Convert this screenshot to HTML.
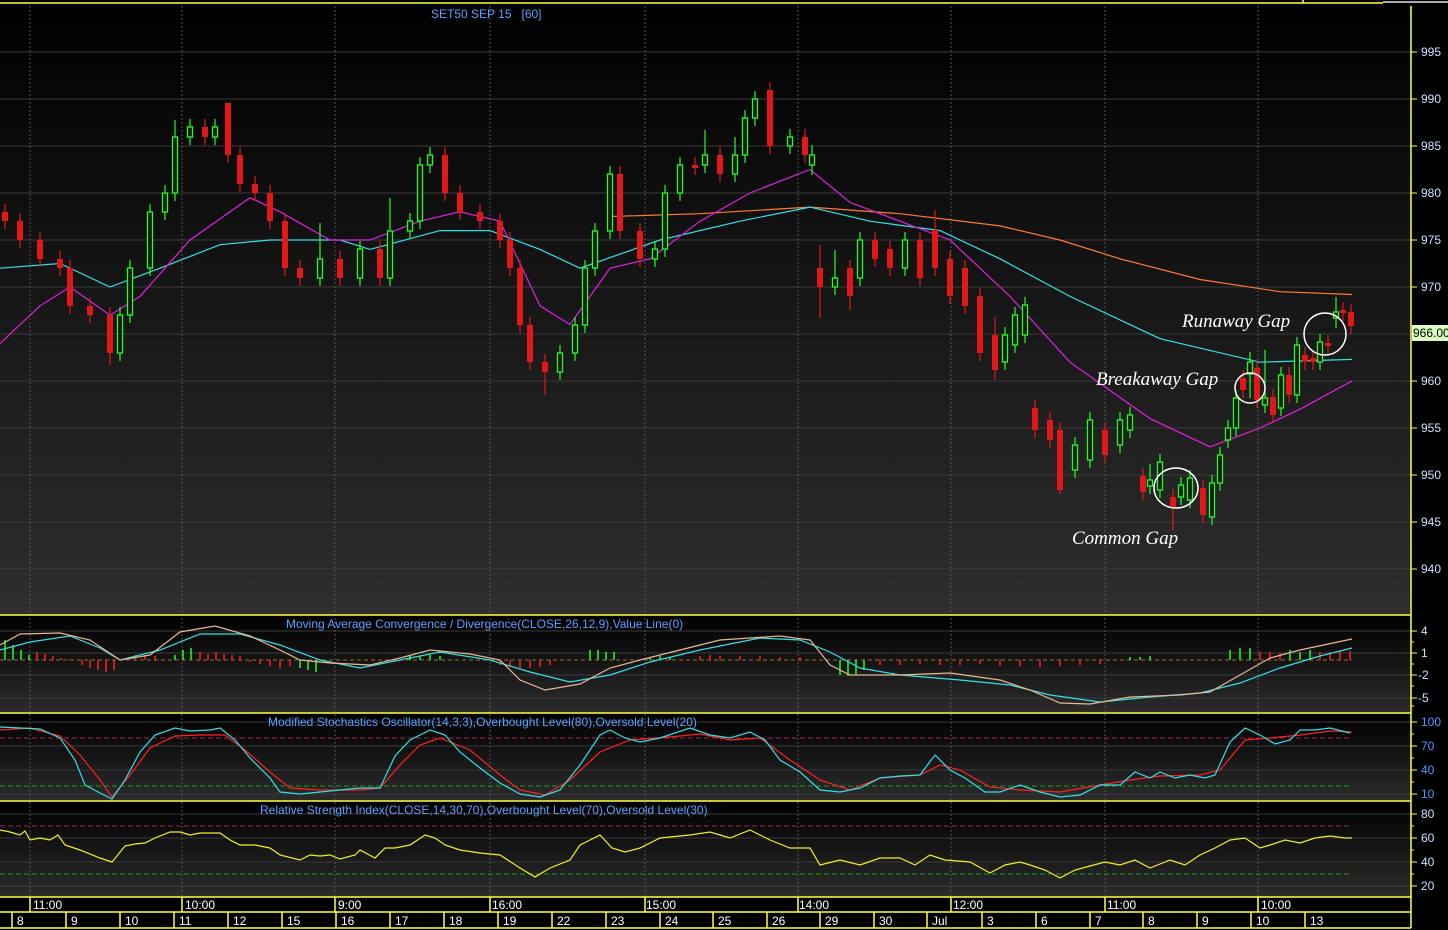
<!DOCTYPE html>
<html><head><meta charset="utf-8">
<style>
html,body{margin:0;padding:0;background:#000;}
svg{display:block;font-family:"Liberation Sans",sans-serif;}
.ax{fill:#cfe0ff;font-size:12px;}
.sb{fill:#4a9cff;font-size:12px;}
.tl{fill:#5aa0ff;font-size:12px;}
.dt{fill:#fff;font-size:12px;}
.an{fill:#fff;font-family:"Liberation Serif",serif;font-style:italic;font-size:19px;}
.g rect{fill:#181818;stroke:#20ff20;stroke-width:1.3;}
.r rect{fill:#e01818;}
</style></head><body>
<svg width="1448" height="930" viewBox="0 0 1448 930" xmlns="http://www.w3.org/2000/svg">
<defs>
<linearGradient id="gm" x1="0" y1="0" x2="0" y2="1"><stop offset="0" stop-color="#000"/><stop offset="1" stop-color="#2e2e2e"/></linearGradient>
<linearGradient id="gs" x1="0" y1="0" x2="0" y2="1"><stop offset="0" stop-color="#000"/><stop offset="1" stop-color="#2c2c2c"/></linearGradient>
</defs>
<rect x="0" y="0" width="1448" height="930" fill="#000"/>
<rect x="0" y="4" width="1411" height="611" fill="url(#gm)"/>
<rect x="0" y="616" width="1411" height="97" fill="url(#gs)"/>
<rect x="0" y="714" width="1411" height="87" fill="url(#gs)"/>
<rect x="0" y="802" width="1411" height="95" fill="url(#gs)"/>
<!-- grid -->
<g stroke="#3a3a3a" stroke-width="1">
<path d="M0 52H1411M0 99H1411M0 146H1411M0 193H1411M0 240H1411M0 287H1411M0 334H1411M0 381H1411M0 428H1411M0 475H1411M0 522H1411M0 569H1411M0 631H1411M0 653H1411M0 675H1411M0 698H1411M0 722H1411M0 746H1411M0 770H1411M0 794H1411M0 814H1411M0 838H1411M0 862H1411M0 886H1411"/>
</g>
<path d="M1411 52h6M1411 99h6M1411 146h6M1411 193h6M1411 240h6M1411 287h6M1411 334h6M1411 381h6M1411 428h6M1411 475h6M1411 522h6M1411 569h6M1411 631h6M1411 653h6M1411 675h6M1411 698h6M1411 722h6M1411 746h6M1411 770h6M1411 794h6M1411 814h6M1411 838h6M1411 862h6M1411 886h6M1411 642h3M1411 664h3M1411 686h3M1411 706h3M1411 734h3M1411 758h3M1411 782h3M1411 826h3M1411 850h3M1411 874h3" stroke="#ffff40"/>
<path d="M30 6V897M182 6V897M335 6V897M490 6V897M645 6V897M798 6V897M951 6V897M1105 6V897M1258 6V897" stroke="#555" stroke-dasharray="2,2"/>
<path d="M0 738H1352M0 826H1352" stroke="#a0204a" stroke-dasharray="5,3"/>
<path d="M0 786H1352M0 874H1352" stroke="#1a9a1a" stroke-dasharray="5,3"/>
<path d="M0 660H1352" stroke="#a06a20" stroke-dasharray="4,3"/>

<!-- moving averages -->
<g fill="none" stroke-width="1.2">
<polyline stroke="#ff7a30" points="610,216.5 700,213.7 810,207.1 900,213.7 1000,225.9 1060,240 1120,258.8 1200,279.5 1280,291.7 1352,294.5"/>
<polyline stroke="#30e0e8" points="0,268.2 60,263.5 110,287 160,268.2 220,244.7 270,240 340,240 370,249.4 440,230.6 490,230.6 540,249.4 580,268.2 660,240 740,221.2 810,207.1 870,221.2 940,230.6 1000,258.8 1070,296.4 1160,338.7 1260,362.2 1352,359.4"/>
<polyline stroke="#e020e0" points="0,343.4 40,305.8 70,287 110,315.2 140,296.4 190,240 250,197.7 280,211.8 330,240 370,240 420,221.2 460,211.8 500,221.2 540,305.8 570,324.6 610,268.2 650,258.8 700,221.2 750,193 810,169.5 850,202.4 900,221.2 950,240 1010,296.4 1070,362.2 1150,418.6 1210,446.8 1260,428 1300,409.2 1352,381"/>
</g>

<!-- wicks -->
<path stroke="#e01818" stroke-width="1.2" d="M5 204V229M20 213V248M40 232V267M60 251V276M70 260V314M90 298V323M110 307V365M205 119V145M228 103V163M240 147V192M255 176V201M270 185V229M285 213V276M300 260V286M340 251V286M380 241V286M445 147V201M460 185V220M480 204V229M500 214V248M510 232V276M520 260V333M530 317V370M545 354V395M620 166V239M640 223V267M695 157V175M720 147V182M770 82V154M805 129V163M820 245V318M850 260V310M875 232V267M890 241V276M920 232V286M935 210V276M950 251V304M965 260V314M980 288V361M995 317V380M1035 400V438M1050 412V448M1060 422V494M1105 422V463M1143 468V500M1173 489V530M1203 480V523M1243 370V398M1257 360V408M1273 389V423M1289 367V403M1305 347V370M1313 350V370M1328 335V354M1343 302V321M1351 304V334"/>
<path stroke="#20ff20" stroke-width="1.2" d="M120 307V361M130 260V323M150 204V276M165 185V220M175 120V201M190 119V145M215 119V145M320 223V286M360 241V286M390 198V286M410 213V239M420 157V229M430 147V173M560 345V380M575 317V361M585 260V333M595 223V276M610 166V239M655 241V267M665 185V257M680 157V201M705 130V173M735 137V182M745 110V163M755 91V126M790 129V154M812 145V175M835 250V295M860 232V286M905 232V276M1005 327V370M1015 307V353M1025 297V343M1075 437V478M1090 412V468M1120 412V453M1130 407V438M1150 464V494M1160 454V498M1181 477V505M1190 470V508M1212 475V525M1220 447V491M1228 420V448M1236 390V436M1250 352V398M1265 350V413M1281 367V416M1297 337V403M1320 334V370M1336 297V328"/>
<g class="r">
<rect x="2" y="212" width="6" height="9"/><rect x="17" y="221" width="6" height="19"/><rect x="37" y="240" width="6" height="19"/><rect x="57" y="259" width="6" height="9"/><rect x="67" y="268" width="6" height="38"/><rect x="87" y="306" width="6" height="9"/><rect x="107" y="315" width="6" height="38"/><rect x="202" y="127" width="6" height="10"/><rect x="225" y="103" width="6" height="52"/><rect x="237" y="155" width="6" height="29"/><rect x="252" y="184" width="6" height="9"/><rect x="267" y="193" width="6" height="28"/><rect x="282" y="221" width="6" height="47"/><rect x="297" y="268" width="6" height="10"/><rect x="337" y="259" width="6" height="19"/><rect x="377" y="249" width="6" height="29"/><rect x="442" y="155" width="6" height="38"/><rect x="457" y="193" width="6" height="19"/><rect x="477" y="212" width="6" height="9"/><rect x="497" y="221" width="6" height="19"/><rect x="507" y="240" width="6" height="28"/><rect x="517" y="268" width="6" height="57"/><rect x="527" y="325" width="6" height="37"/><rect x="542" y="362" width="6" height="10"/><rect x="617" y="174" width="6" height="57"/><rect x="637" y="231" width="6" height="28"/><rect x="692" y="165" width="6" height="3"/><rect x="717" y="155" width="6" height="19"/><rect x="767" y="90" width="6" height="56"/><rect x="802" y="137" width="6" height="18"/><rect x="817" y="268" width="6" height="19"/><rect x="847" y="268" width="6" height="28"/><rect x="872" y="240" width="6" height="19"/><rect x="887" y="249" width="6" height="19"/><rect x="917" y="240" width="6" height="38"/><rect x="932" y="230" width="6" height="38"/><rect x="947" y="259" width="6" height="37"/><rect x="962" y="268" width="6" height="38"/><rect x="977" y="296" width="6" height="57"/><rect x="992" y="335" width="6" height="35"/><rect x="1032" y="408" width="6" height="22"/><rect x="1047" y="420" width="6" height="20"/><rect x="1057" y="430" width="6" height="60"/><rect x="1102" y="430" width="6" height="25"/><rect x="1140" y="476" width="6" height="16"/><rect x="1170" y="497" width="6" height="10"/><rect x="1200" y="488" width="6" height="27"/><rect x="1240" y="378" width="6" height="12"/><rect x="1254" y="368" width="6" height="32"/><rect x="1270" y="397" width="6" height="18"/><rect x="1286" y="375" width="6" height="20"/><rect x="1302" y="355" width="6" height="7"/><rect x="1310" y="358" width="6" height="4"/><rect x="1325" y="343" width="6" height="3"/><rect x="1340" y="310" width="6" height="3"/><rect x="1348" y="312" width="6" height="14"/>
</g>
<g class="g">
<rect x="117.5" y="315" width="5" height="38"/><rect x="127.5" y="268" width="5" height="47"/><rect x="147.5" y="212" width="5" height="56"/><rect x="162.5" y="193" width="5" height="19"/><rect x="172.5" y="137" width="5" height="56"/><rect x="187.5" y="127" width="5" height="10"/><rect x="212.5" y="127" width="5" height="10"/><rect x="317.5" y="259" width="5" height="19"/><rect x="357.5" y="249" width="5" height="29"/><rect x="387.5" y="231" width="5" height="47"/><rect x="407.5" y="221" width="5" height="10"/><rect x="417.5" y="165" width="5" height="56"/><rect x="427.5" y="155" width="5" height="10"/><rect x="557.5" y="353" width="5" height="19"/><rect x="572.5" y="325" width="5" height="28"/><rect x="582.5" y="268" width="5" height="57"/><rect x="592.5" y="231" width="5" height="37"/><rect x="607.5" y="174" width="5" height="57"/><rect x="652.5" y="249" width="5" height="10"/><rect x="662.5" y="193" width="5" height="56"/><rect x="677.5" y="165" width="5" height="28"/><rect x="702.5" y="155" width="5" height="10"/><rect x="732.5" y="155" width="5" height="19"/><rect x="742.5" y="118" width="5" height="37"/><rect x="752.5" y="99" width="5" height="19"/><rect x="787.5" y="137" width="5" height="9"/><rect x="809.5" y="155" width="5" height="10"/><rect x="832.5" y="278" width="5" height="9"/><rect x="857.5" y="240" width="5" height="38"/><rect x="902.5" y="240" width="5" height="28"/><rect x="1002.5" y="335" width="5" height="27"/><rect x="1012.5" y="315" width="5" height="30"/><rect x="1022.5" y="305" width="5" height="30"/><rect x="1072.5" y="445" width="5" height="25"/><rect x="1087.5" y="420" width="5" height="40"/><rect x="1117.5" y="420" width="5" height="25"/><rect x="1127.5" y="415" width="5" height="15"/><rect x="1147.5" y="480" width="5" height="6"/><rect x="1157.5" y="462" width="5" height="28"/><rect x="1178.5" y="485" width="5" height="12"/><rect x="1187.5" y="478" width="5" height="22"/><rect x="1209.5" y="483" width="5" height="34"/><rect x="1217.5" y="455" width="5" height="28"/><rect x="1225.5" y="428" width="5" height="12"/><rect x="1233.5" y="398" width="5" height="30"/><rect x="1247.5" y="362" width="5" height="12"/><rect x="1262.5" y="398" width="5" height="7"/><rect x="1278.5" y="375" width="5" height="33"/><rect x="1294.5" y="345" width="5" height="50"/><rect x="1317.5" y="342" width="5" height="20"/><rect x="1333.5" y="312" width="5" height="6"/>
</g>

<!-- MACD -->
<path stroke="#20ff20" stroke-width="1.5" d="M5 660V640M13 660V645M21 660V650M29 660V655M175 660V655M183 660V650M191 660V648M300 660V668M308 660V670M316 660V672M410 660V656M420 660V656M430 660V655M440 660V656M590 660V650M598 660V650M606 660V652M614 660V652M650 660V657M660 660V656M670 660V657M840 660V675M848 660V676M856 660V674M864 660V670M1130 660V657M1140 660V657M1150 660V656M1230 660V650M1240 660V648M1250 660V648M1290 660V650M1300 660V652M1310 660V650"/>
<path stroke="#ff2020" stroke-width="1.5" d="M37 660V652M45 660V654M53 660V656M61 660V658M69 660V659M82 660V665M90 660V668M98 660V670M106 660V672M114 660V670M135 660V655M145 660V655M155 660V656M200 660V652M208 660V654M216 660V652M224 660V654M232 660V655M240 660V656M250 660V662M260 660V664M270 660V666M280 660V668M290 660V666M500 660V665M510 660V667M520 660V668M530 660V668M540 660V667M550 660V665M700 660V656M710 660V655M720 660V656M740 660V656M760 660V656M780 660V657M800 660V657M880 660V665M900 660V665M920 660V664M940 660V665M960 660V665M980 660V664M1000 660V666M1020 660V666M1040 660V667M1060 660V666M1080 660V665M1100 660V664M1260 660V652M1270 660V652M1280 660V653M1320 660V652M1330 660V652M1340 660V651M1350 660V651"/>
<g fill="none" stroke-width="1.2">
<polyline stroke="#30e0e8" points="0,650 30,642 70,636 100,648 120,660 160,650 200,634 240,634 280,645 320,660 360,668 400,660 440,652 490,660 530,672 570,682 610,675 650,662 700,650 760,638 800,640 830,652 860,668 900,675 960,680 1010,685 1050,695 1100,702 1150,697 1200,693 1240,683 1280,668 1320,656 1352,648"/>
<polyline stroke="#e8b890" points="0,645 20,634 60,633 90,640 120,660 150,655 180,632 215,626 250,636 280,650 300,660 330,663 370,665 400,658 430,650 470,654 500,660 520,680 545,690 580,684 610,668 640,660 680,650 720,640 780,636 810,640 830,665 850,675 900,675 950,673 1000,680 1030,690 1060,703 1090,704 1130,697 1180,695 1210,692 1240,675 1270,658 1300,650 1352,639"/>
<!-- stochastics -->
<polyline stroke="#ff2020" points="0,730 30,728 60,736 80,755 100,780 112,797 130,775 150,748 175,736 200,735 225,735 245,750 270,772 290,788 320,790 360,790 380,788 400,765 420,745 440,738 470,750 500,775 520,790 545,795 570,780 600,752 630,740 670,737 700,734 730,740 760,738 790,760 820,780 850,790 880,778 920,775 940,765 960,770 990,787 1020,790 1060,792 1100,785 1130,780 1160,776 1200,775 1220,770 1245,740 1270,738 1300,735 1330,731 1352,732"/>
<polyline stroke="#30e0e8" points="0,727 20,728 40,729 60,738 75,760 85,785 100,793 112,799 125,780 140,752 155,735 175,728 190,731 210,730 220,728 235,740 250,758 270,778 280,792 300,794 320,792 340,790 360,788 380,788 395,756 410,740 430,730 445,735 460,752 480,768 500,783 520,794 540,797 560,790 580,765 600,735 610,730 625,738 640,742 660,738 690,728 710,735 730,738 750,732 765,740 780,760 800,772 820,790 840,792 860,788 880,778 900,776 920,775 935,755 950,770 965,778 985,792 1000,792 1020,785 1040,792 1060,797 1080,795 1100,785 1120,785 1135,772 1150,778 1160,772 1175,778 1190,775 1205,778 1215,775 1230,742 1245,728 1260,735 1275,744 1290,740 1300,730 1315,730 1330,728 1350,733"/>
<!-- RSI -->
<polyline stroke="#f0f020" points="0,830 10,832 20,835 25,831 30,840 40,838 50,840 58,835 65,845 80,850 100,858 112,862 125,846 135,844 145,843 155,838 170,832 180,832 190,835 200,833 220,833 230,840 240,845 255,845 270,848 280,855 300,860 310,855 320,856 330,855 340,859 355,855 360,850 375,858 385,848 395,848 410,845 425,835 435,838 445,845 460,850 480,853 500,855 520,868 535,877 550,868 570,860 580,845 590,840 600,835 612,848 625,852 640,848 660,838 690,835 710,832 730,838 750,830 770,840 790,848 810,848 820,865 840,860 860,865 880,858 900,858 915,865 930,855 945,860 970,862 990,873 1005,865 1020,862 1030,865 1045,870 1060,878 1075,870 1090,866 1105,862 1120,865 1135,860 1150,868 1170,860 1185,865 1200,855 1215,848 1230,840 1245,838 1260,848 1270,845 1285,840 1300,843 1315,838 1330,836 1345,838 1352,838"/>
</g>

<!-- borders -->
<g stroke="#ffff40" stroke-width="1.5" fill="none">
<line x1="0" y1="3" x2="1383" y2="3"/>
<line x1="1411" y1="6" x2="1411" y2="928"/>
<line x1="0" y1="615" x2="1411" y2="615"/>
<line x1="0" y1="713" x2="1411" y2="713"/>
<line x1="0" y1="801" x2="1411" y2="801"/>
<line x1="0" y1="897" x2="1411" y2="897"/>
<line x1="0" y1="912" x2="1411" y2="912"/>
<line x1="0" y1="928" x2="1411" y2="928"/>
<line x1="1303" y1="0" x2="1303" y2="3"/>
<path d="M30 897V912M182 897V912M335 897V912M490 897V912M645 897V912M798 897V912M951 897V912M1105 897V912M1258 897V912"/>
<path d="M12 912V928M66 912V928M120 912V928M174 912V928M228 912V928M282 912V928M336 912V928M390 912V928M444 912V928M498 912V928M552 912V928M606 912V928M660 912V928M713 912V928M767 912V928M820 912V928M874 912V928M927 912V928M982 912V928M1036 912V928M1090 912V928M1143 912V928M1197 912V928M1251 912V928M1305 912V928"/>
</g>
<line x1="1383" y1="2" x2="1448" y2="2" stroke="#aaa" stroke-width="2"/>
<text x="431" y="18" class="tl">SET50 SEP 15 &#160; [60]</text>
<g class="ax">
<text x="1421" y="56">995</text><text x="1421" y="103">990</text><text x="1421" y="150">985</text>
<text x="1421" y="197">980</text><text x="1421" y="244">975</text><text x="1421" y="291">970</text>
<text x="1421" y="385">960</text><text x="1421" y="432">955</text><text x="1421" y="479">950</text>
<text x="1421" y="526">945</text><text x="1421" y="573">940</text>
<text x="1421" y="635">4</text><text x="1421" y="657">1</text><text x="1418" y="679">-2</text><text x="1418" y="702">-5</text>
<text x="1421" y="818">80</text><text x="1421" y="842">60</text><text x="1421" y="866">40</text><text x="1421" y="890">20</text>
</g>
<g class="sb">
<text x="1421" y="726">100</text><text x="1421" y="750">70</text><text x="1421" y="774">40</text><text x="1421" y="798">10</text>
</g>
<rect x="1412" y="325" width="36" height="16" fill="#d8ffc0"/>
<text x="1413" y="337" fill="#000" font-size="12">966.00</text>
<text x="286" y="628" class="tl">Moving Average Convergence / Divergence(CLOSE,26,12,9),Value Line(0)</text>
<text x="268" y="726" class="tl">Modified Stochastics Oscillator(14,3,3),Overbought Level(80),Oversold Level(20)</text>
<text x="260" y="814" class="tl">Relative Strength Index(CLOSE,14,30,70),Overbought Level(70),Oversold Level(30)</text>
<text x="1182" y="327" class="an">Runaway Gap</text>
<text x="1096" y="385" class="an">Breakaway Gap</text>
<text x="1072" y="544" class="an">Common Gap</text>
<g fill="none" stroke="#fff" stroke-width="1.5">
<circle cx="1325" cy="334" r="21"/>
<circle cx="1250" cy="388" r="15"/>
<ellipse cx="1176" cy="488" rx="22" ry="20"/>
</g>
<g class="dt">
<text x="33" y="909">11:00</text><text x="185" y="909">10:00</text><text x="338" y="909">9:00</text>
<text x="492" y="909">16:00</text><text x="646" y="909">15:00</text><text x="799" y="909">14:00</text>
<text x="953" y="909">12:00</text><text x="1107" y="909">11:00</text><text x="1261" y="909">10:00</text>
<text x="17" y="925">8</text><text x="71" y="925">9</text><text x="125" y="925">10</text><text x="179" y="925">11</text><text x="233" y="925">12</text><text x="287" y="925">15</text><text x="341" y="925">16</text><text x="395" y="925">17</text><text x="449" y="925">18</text><text x="503" y="925">19</text><text x="557" y="925">22</text><text x="611" y="925">23</text><text x="665" y="925">24</text><text x="718" y="925">25</text><text x="772" y="925">26</text><text x="825" y="925">29</text><text x="879" y="925">30</text><text x="932" y="925">Jul</text><text x="987" y="925">3</text><text x="1041" y="925">6</text><text x="1095" y="925">7</text><text x="1148" y="925">8</text><text x="1202" y="925">9</text><text x="1256" y="925">10</text><text x="1310" y="925">13</text>
</g>
</svg>
</body></html>
